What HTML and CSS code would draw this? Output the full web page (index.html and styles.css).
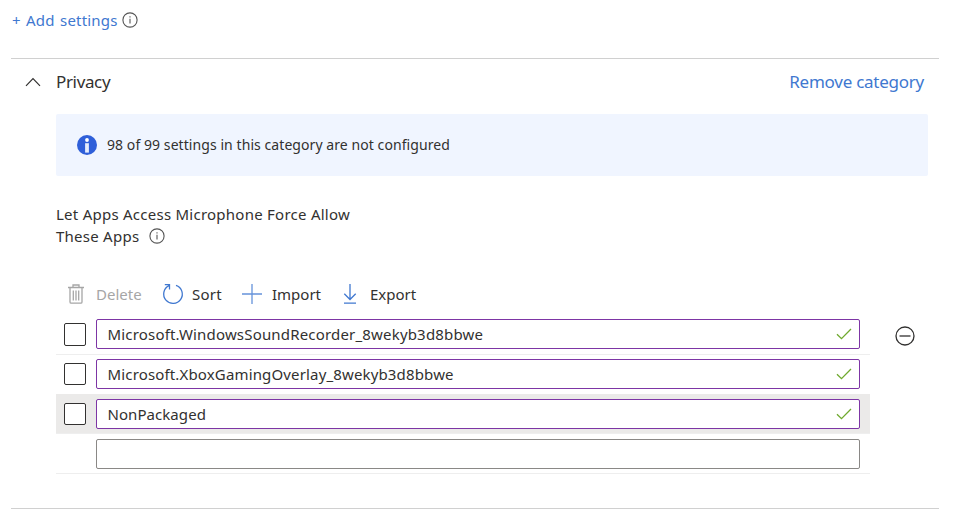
FILE: index.html
```
<!DOCTYPE html>
<html lang="en">
<head>
<meta charset="utf-8">
<title>Settings</title>
<link rel="stylesheet" href="styles.css">
</head>
<body>
<main class="page">
  <div class="add-row">
    <a class="add-link">+ Add settings</a>
    <svg class="info" viewBox="0 0 16 16"><circle cx="8" cy="8" r="7.1"/><path d="M8 6.8v4.7M8 4.2v1.2"/></svg>
  </div>
  <section class="category">
    <header class="category-head">
      <svg class="chevron" viewBox="0 0 16 10"><path d="M1 8.8 8 1.5l7 7.3"/></svg>
      <h2 class="category-title">Privacy</h2>
      <a class="remove-link">Remove category</a>
    </header>
    <div class="banner">
      <svg class="banner-icon" viewBox="0 0 20 20"><circle cx="10" cy="10" r="10" fill="#2f5fd9"/><circle cx="10" cy="5" r="1.9" fill="#fff"/><path d="M8.1 8.2h3.8V17.6H8.1z" fill="#e6edfc"/></svg>
      <span class="banner-text">98 of 99 settings in this category are not configured</span>
    </div>
    <div class="setting-name">
      <div class="name-first">Let Apps Access Microphone Force Allow</div>
      <div class="name-line"><span class="name-second">These Apps</span><svg class="info" viewBox="0 0 16 16"><circle cx="8" cy="8" r="7.1"/><path d="M8 6.8v4.7M8 4.2v1.2"/></svg></div>
    </div>
    <div class="setting-body">
      <div class="list">
        <div class="toolbar">
          <div class="tool tool-delete"><svg class="tool-icon trash" viewBox="0 0 16 20"><path d="M0 3.5h16M5 3.5V1h6v2.500M2 3.5V18q0 1.2 1.2 1.2h9.6q1.2 0 1.2-1.2V3.5M5.3 6.5v10M8 6.5v10M10.7 6.5v10"/></svg><span class="tool-text">Delete</span></div>
          <div class="tool tool-sort"><svg class="tool-icon sort" viewBox="0 0 22 22"><path d="M14 2.3A9.3 9.3 0 1 1 7 2.7M2.8 1.7h4.7v4.8"/></svg><span class="tool-text">Sort</span></div>
          <div class="tool tool-import"><svg class="tool-icon plus" viewBox="0 0 20 20"><path d="M10 0v20M0 10h20"/></svg><span class="tool-text">Import</span></div>
          <div class="tool tool-export"><svg class="tool-icon down" viewBox="0 0 14 20"><path d="M7 0v15M1.3 9.8 7 15.5l5.7-5.7M1 19.2h12"/></svg><span class="tool-text">Export</span></div>
        </div>
        <div class="row row-a">
          <span class="check"></span>
          <div class="field"><span class="value-a">Microsoft.WindowsSoundRecorder_8wekyb3d8bbwe</span><svg class="tick" viewBox="0 0 16 12"><path d="M1 6.2 5.5 10.7 15 1"/></svg></div>
        </div>
        <div class="row row-b">
          <span class="check"></span>
          <div class="field"><span class="value-b">Microsoft.XboxGamingOverlay_8wekyb3d8bbwe</span><svg class="tick" viewBox="0 0 16 12"><path d="M1 6.2 5.5 10.7 15 1"/></svg></div>
        </div>
        <div class="row row-c">
          <span class="check"></span>
          <div class="field"><span class="value-c">NonPackaged</span><svg class="tick" viewBox="0 0 16 12"><path d="M1 6.2 5.5 10.7 15 1"/></svg></div>
        </div>
        <div class="row row-d">
          <div class="field field-empty"></div>
        </div>
      </div>
      <svg class="minus" viewBox="0 0 20 20"><circle cx="10" cy="10" r="9"/><path d="M4.5 10h11"/></svg>
    </div>
  </section>
</main>
</body>
</html>
```

FILE: styles.css
```
* { box-sizing: border-box; }
body {
  margin: 0;
  background: #fff;
  color: #323130;
  font-family: "Noto Sans", "Open Sans", sans-serif;
  font-size: 15px;
  line-height: 22px;
}
svg { display: block; flex: none; fill: none; }
span, a, h2 { white-space: nowrap; }
.page { padding: 0 16px 0 11px; }
.add-row { display: flex; align-items: center; height: 58px; padding: 0 0 18px 1px; }
.add-link { color: #4078d0; letter-spacing: 0.2px; word-spacing: 1.2px; }
.info { width: 16px; height: 16px; margin-left: 4px; stroke: #555; stroke-width: 1.1; }
.category { height: 451px; border-top: 1px solid #d0d0d0; border-bottom: 1px solid #d0d0d0; padding: 0 11px 0 45px; }
.category-head { display: flex; align-items: center; height: 55px; margin-left: -31px; padding: 0 4px 9px 0; }
.chevron { width: 16px; height: 10px; stroke: #323130; stroke-width: 1.2; }
.category-title { margin: 0 0 0 15px; font-size: 17px; font-weight: 400; letter-spacing: -0.35px; }
.remove-link { margin-left: auto; color: #4078d0; font-size: 17px; letter-spacing: -0.25px; }
.banner { display: flex; align-items: center; height: 62px; padding-left: 21px; background: #f0f5ff; border-radius: 2px; }
.banner-icon { width: 20px; height: 20px; }
.banner-text { margin-left: 10px; font-size: 14px; letter-spacing: 0.07px; }
.setting-name { height: 102px; padding-top: 27px; letter-spacing: 0.25px; }
.name-line { display: flex; align-items: center; }
.name-line .info { margin-left: 10px; }
.setting-body { display: flex; width: 872px; }
.list { width: 814px; }
.toolbar { display: flex; height: 37px; padding-left: 12px; }
.tool { display: flex; height: 32px; align-items: center; }
.tool-icon { stroke: #4078d0; stroke-width: 1.3; }
.tool-delete { width: 94px; color: #a6a6a6; }
.tool-sort { width: 80px; }
.tool-import { width: 101px; }
.trash { width: 16px; height: 20px; stroke: #a6a6a6; margin: 0 12px 0 0; }
.sort { width: 22px; height: 22px; margin-right: 8px; }
.sort + .tool-text { letter-spacing: 0.25px; }
.plus { width: 20px; height: 20px; margin-right: 10px; stroke: #6593da; }
.down { width: 14px; height: 20px; margin-right: 13px; }
.row { display: flex; height: 40px; border-bottom: 1px solid #eee; padding: 4px 10px 0 8px; }
.row-b { height: 39px; border: 0; }
.row-c { padding-top: 5px; background: #ebeae9; }
.row-d { padding: 5px 10px 0 40px; }
.check { width: 22px; height: 22px; margin: 4px 10px 0 0; border: 1px solid #323130; border-radius: 2px; background: #fff; flex: none; }
.row-a .check { height: 23px; }
.field { display: flex; align-items: center; justify-content: space-between; width: 764px; height: 30px; padding: 0 7px 0 10.5px; border: 1px solid #7d35a5; border-radius: 2px; background: #fff; }
.value-a { letter-spacing: 0.18px; }
.value-b { letter-spacing: 0.15px; }
.value-c { letter-spacing: 0.06px; }
.field-empty { border-color: #8a8886; }
.tick { width: 16px; height: 12px; margin-top: -1px; stroke: #6fa92e; stroke-width: 1.3; }
.minus { width: 20px; height: 20px; margin: 48px 0 0 24.5px; stroke: #323130; stroke-width: 1.3; }
```
